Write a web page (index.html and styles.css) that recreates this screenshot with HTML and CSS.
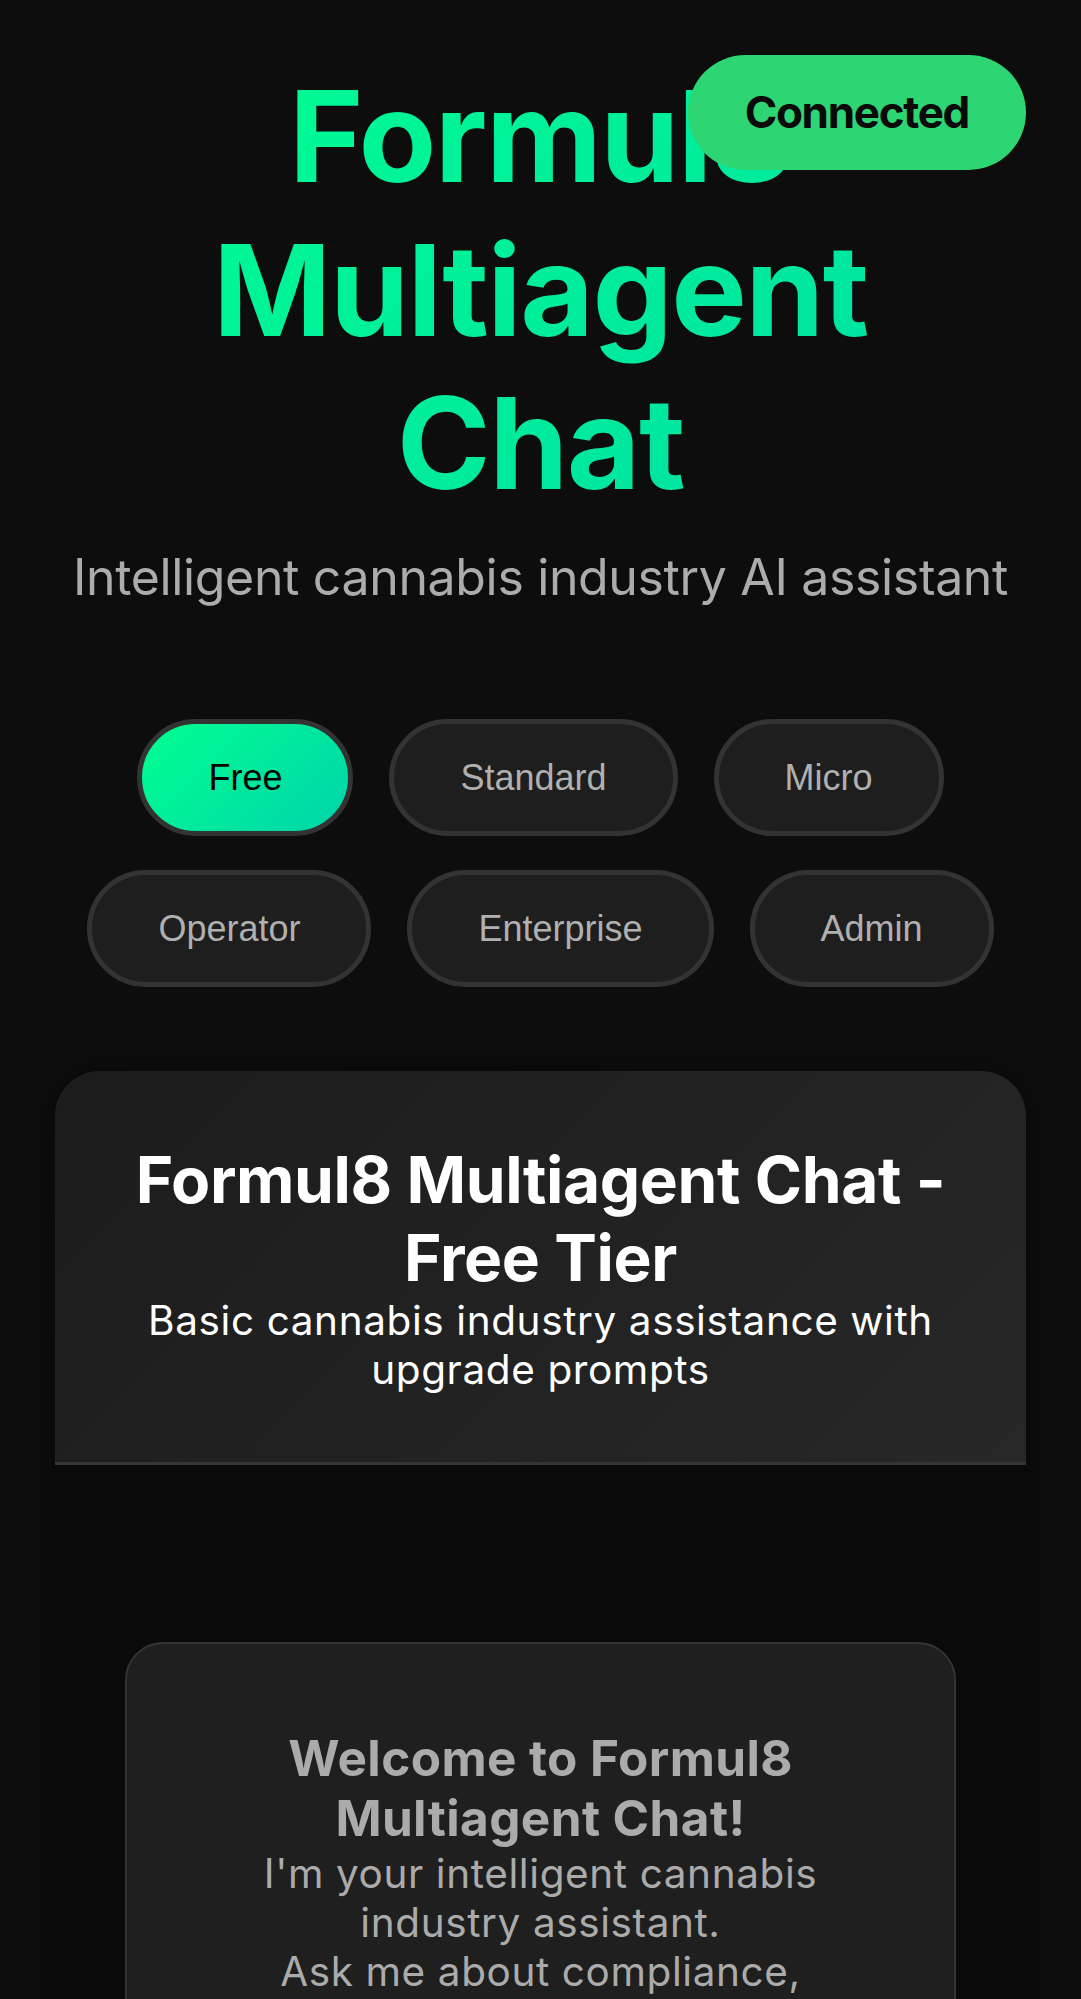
FILE: index.html
```html
<!DOCTYPE html>
<html lang="en">
<head>
<meta charset="utf-8">
<title>Formul8 Multiagent Chat</title>
<link rel="stylesheet" href="styles.css">
</head>
<body>
<div class="status-badge">Connected</div>
<div class="page">
  <header class="hero">
    <h1 class="hero-title">Formul8 Multiagent Chat</h1>
    <p class="hero-subtitle">Intelligent cannabis industry AI assistant</p>
  </header>

  <nav class="tier-selector">
    <button class="tier-btn active">Free</button>
    <button class="tier-btn">Standard</button>
    <button class="tier-btn">Micro</button>
    <button class="tier-btn">Operator</button>
    <button class="tier-btn">Enterprise</button>
    <button class="tier-btn">Admin</button>
  </nav>

  <section class="chat-card">
    <div class="chat-header">
      <h2 class="chat-title">Formul8 Multiagent Chat - Free Tier</h2>
      <p class="chat-desc">Basic cannabis industry assistance with upgrade prompts</p>
    </div>
    <div class="chat-messages">
      <div class="welcome">
        <h3 class="welcome-title">Welcome to Formul8 Multiagent Chat!</h3>
        <p class="welcome-text">I'm your intelligent cannabis industry assistant.<br>Ask me about compliance, formulation, marketing, operations and more.</p>
      </div>
    </div>
  </section>
</div>
</body>
</html>
```

FILE: styles.css
```css
* { box-sizing: border-box; }

html, body {
  margin: 0;
  padding: 0;
  background: #0d0d0d;
  font-family: Inter, "Noto Sans", sans-serif;
}

.page {
  padding: 0 55px;
}

.status-badge {
  position: fixed;
  top: 55px;
  right: 55px;
  z-index: 10;
  background: #2ed573;
  color: #0a0a0a;
  font-weight: 700;
  font-size: 44px;
  letter-spacing: -1.3px;
  line-height: 53px;
  padding: 31px 57px;
  border-radius: 999px;
}

.hero {
  text-align: center;
  padding-top: 60px;
}

.hero-title {
  margin: 0;
  font-size: 127px;
  font-weight: 700;
  letter-spacing: -1.5px;
  line-height: 1.21;
  background: linear-gradient(135deg, #00ff90 0%, #00dca6 100%);
  -webkit-background-clip: text;
  background-clip: text;
  color: transparent;
  padding: 0 120px;
}

.hero-subtitle {
  margin: 26px 0 0;
  font-size: 50px;
  letter-spacing: -0.35px;
  line-height: 1.21;
  color: #acacac;
}

.tier-selector {
  display: flex;
  flex-wrap: wrap;
  justify-content: center;
  gap: 34px 36px;
  margin-top: 112px;
}

.tier-btn {
  font-family: "Liberation Sans", Arial, sans-serif;
  font-size: 36px;
  line-height: 41px;
  padding: 33px 66px;
  border: 5px solid #333;
  border-radius: 999px;
  background: #1e1e1e;
  color: #b0b0b0;
}

.tier-btn.active {
  background: linear-gradient(135deg, #00ff90 0%, #00d4aa 100%);
  color: #000;
}

.chat-card {
  margin-top: 84px;
  border-radius: 45px 45px 0 0;
  overflow: hidden;
  box-shadow: 0 0 30px rgba(0,0,0,0.4);
}

.chat-header {
  background: linear-gradient(135deg, #1c1c1c 0%, #272727 100%);
  border-bottom: 3px solid #353535;
  padding: 70px 45px 68px;
  text-align: center;
  color: #fff;
}

.chat-title {
  margin: 0;
  font-size: 64px;
  font-weight: 700;
  letter-spacing: -0.4px;
  line-height: 1.21;
}

.chat-desc {
  margin: 0;
  font-size: 40.5px;
  letter-spacing: 0.6px;
  line-height: 1.21;
}

.chat-messages {
  background: #0a0a0a;
  padding: 177px 70px 200px;
}

.welcome {
  margin: 0 auto;
  width: 831px;
  background: #1f1f1f;
  border: 2px solid #333;
  border-radius: 38px;
  padding: 85px 90px;
  text-align: center;
  color: #ababab;
}

.welcome-title {
  margin: 0;
  font-size: 49.5px;
  font-weight: 700;
  letter-spacing: 0.4px;
  line-height: 1.21;
}

.welcome-text {
  margin: 0;
  font-size: 40.5px;
  letter-spacing: 0.6px;
  line-height: 1.21;
}
```
